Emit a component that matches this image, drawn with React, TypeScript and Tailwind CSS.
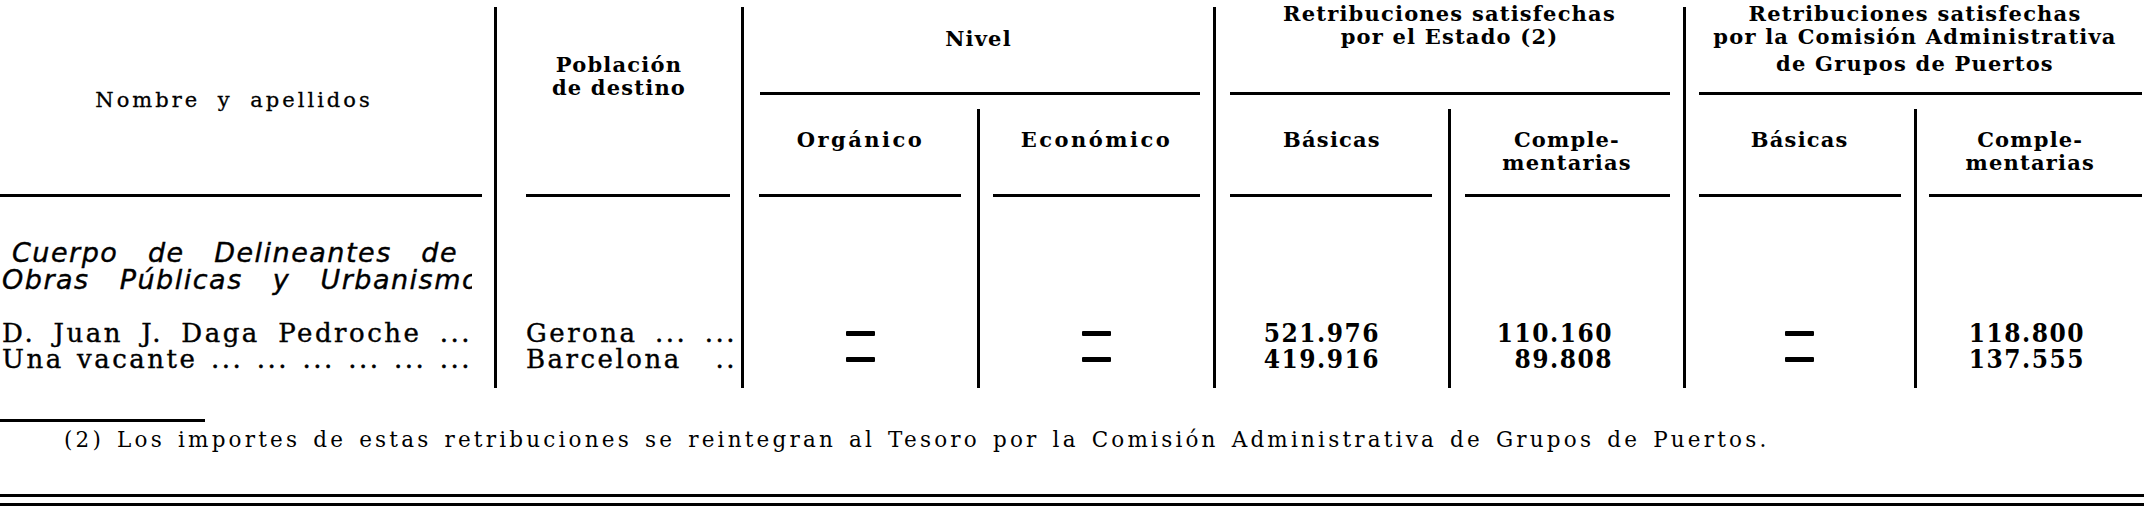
import type { ReactNode } from 'react';

const head = "font-bold text-[21px] leading-[23px] tracking-[1.2px] text-center";
const row = "h-[26px] flex items-center";
const body = "text-[26px] leading-[26px] tracking-[2.5px] [-webkit-text-stroke:0.4px_black]";

const Rule = ({ className = '' }: { className?: string }) => (
  <div className={`h-[3px] bg-black ${className}`} />
);

const Dash = () => <span className="block w-[29px] h-[5px] bg-black rounded-[1px]" />;

// one leaf column under a grouped header
const Sub = ({
  label,
  border,
  line,
  cells,
  align,
}: {
  label: ReactNode;
  border?: boolean;
  line: string;
  cells: ReactNode[];
  align: string;
}) => (
  <div className={`flex-1 flex flex-col ${border ? 'border-l-[3px] border-black' : ''}`}>
    <div className={`h-[85px] pt-[19px] ${head}`}>{label}</div>
    <Rule className={line} />
    <div className="pt-[123px]">
      {cells.map((c, i) => (
        <div key={i} className={`${row} ${align}`}>
          {c}
        </div>
      ))}
    </div>
  </div>
);

const nums = "font-['DejaVu_Serif_Condensed','DejaVu_Serif',serif] font-bold text-[26px] tracking-[1.5px]";

export default function App() {
  return (
    <div className="w-[2144px] h-[509px] bg-white text-black overflow-hidden font-['DejaVu_Serif','Liberation_Serif',serif]">
      {/* table */}
      <div className="flex pt-[7px]">
        {/* Nombre y apellidos */}
        <div className="w-[494px] shrink-0 h-[381px] flex flex-col">
          <div className="h-[187px] pr-[26px] flex items-center justify-center text-[21px] tracking-[3px] [word-spacing:8px] [-webkit-text-stroke:0.3px_black]">
            Nombre y apellidos
          </div>
          <Rule className="mr-[12px]" />
          <div className="pt-[42px] pb-[8px] w-[472px] overflow-hidden font-['DejaVu_Sans',sans-serif] italic text-[27px] leading-[27px] tracking-[1.5px] [-webkit-text-stroke:0.4px_black]">
            <div className="flex justify-between pl-[12px] pr-[14px]">
              <span>Cuerpo</span>
              <span>de</span>
              <span>Delineantes</span>
              <span>de</span>
            </div>
            <div className="flex justify-between pl-[2px]">
              <span>Obras</span>
              <span>Públicas</span>
              <span>y</span>
              <span className="-mr-[8px]">Urbanismo</span>
            </div>
          </div>
          <div className={`mt-[19px] pl-[2px] ${body}`}>
            <div className="w-[470px] [text-align-last:justify]">D. Juan J. Daga Pedroche ...</div>
            <div className="w-[470px] [text-align-last:justify]">Una vacante ... ... ... ... ... ...</div>
          </div>
        </div>

        {/* Población de destino */}
        <div className="w-[247px] shrink-0 h-[381px] border-l-[3px] border-black flex flex-col">
          <div className={`h-[187px] pt-[46px] ${head} leading-[22px]`}>
            Población
            <br />
            de destino
          </div>
          <Rule className="ml-[29px] mr-[11px]" />
          <div className={`pt-[123px] pl-[29px] ${body}`}>
            <div className="w-[211px] [text-align-last:justify]">Gerona ... ...</div>
            <div className="w-[211px] [text-align-last:justify]">Barcelona ..</div>
          </div>
        </div>

        {/* Nivel */}
        <div className="w-[472px] shrink-0 h-[381px] border-l-[3px] border-black flex flex-col">
          <div className={`h-[85px] pt-[20px] ${head}`}>Nivel</div>
          <Rule className="ml-[16px] mr-[13px]" />
          <div className="h-[14px]" />
          <div className="flex flex-1">
            <Sub
              label={<span className="tracking-[2.5px]">Orgánico</span>}
              line="ml-[15px] mr-[16px]"
              cells={[<Dash />, <Dash />]}
              align="justify-center"
            />
            <Sub
              label={<span className="tracking-[2.5px]">Económico</span>}
              border
              line="ml-[13px] mr-[13px]"
              cells={[<Dash />, <Dash />]}
              align="justify-center"
            />
          </div>
        </div>

        {/* Retribuciones Estado */}
        <div className="w-[470px] shrink-0 h-[381px] border-l-[3px] border-black flex flex-col">
          <div className={`h-[85px] whitespace-nowrap ${head}`}>
            <div className="-mt-[5px]">
              Retribuciones satisfechas
              <br />
              por el Estado (2)
            </div>
          </div>
          <Rule className="ml-[14px] mr-[13px]" />
          <div className="h-[14px]" />
          <div className="flex flex-1">
            <Sub
              label="Básicas"
              line="ml-[14px] mr-[16px]"
              cells={[<span className={nums}>521.976</span>, <span className={nums}>419.916</span>]}
              align="justify-end pr-[68px]"
            />
            <Sub
              label={
                <>
                  Comple-
                  <br />
                  mentarias
                </>
              }
              border
              line="ml-[14px] mr-[13px]"
              cells={[<span className={nums}>110.160</span>, <span className={nums}>89.808</span>]}
              align="justify-end pr-[70px]"
            />
          </div>
        </div>

        {/* Retribuciones Comisión */}
        <div className="w-[461px] shrink-0 h-[381px] border-l-[3px] border-black flex flex-col">
          <div className={`h-[85px] whitespace-nowrap ${head}`}>
            <div className="-mt-[5px]">
              Retribuciones satisfechas
              <br />
              por la Comisión Administrativa
            </div>
            <div className="mt-[4px]">de Grupos de Puertos</div>
          </div>
          <Rule className="ml-[13px] mr-[2px]" />
          <div className="h-[14px]" />
          <div className="flex flex-1">
            <Sub label="Básicas" line="ml-[13px] mr-[13px]" cells={[<Dash />, <Dash />]} align="justify-center" />
            <Sub
              label={
                <>
                  Comple-
                  <br />
                  mentarias
                </>
              }
              border
              line="ml-[12px] mr-[2px]"
              cells={[<span className={nums}>118.800</span>, <span className={nums}>137.555</span>]}
              align="justify-end pr-[59px]"
            />
          </div>
        </div>
      </div>

      {/* footnote */}
      <Rule className="mt-[31px] w-[205px]" />
      <p className="mt-[6px] pl-[64px] text-[21.5px] leading-[24px] tracking-[3.2px] [word-spacing:3px] whitespace-nowrap">
        (2) Los importes de estas retribuciones se reintegran al Tesoro por la Comisión Administrativa de Grupos de Puertos.
      </p>
      <Rule className="mt-[42px]" />
      <Rule className="mt-[6px]" />
    </div>
  );
}
